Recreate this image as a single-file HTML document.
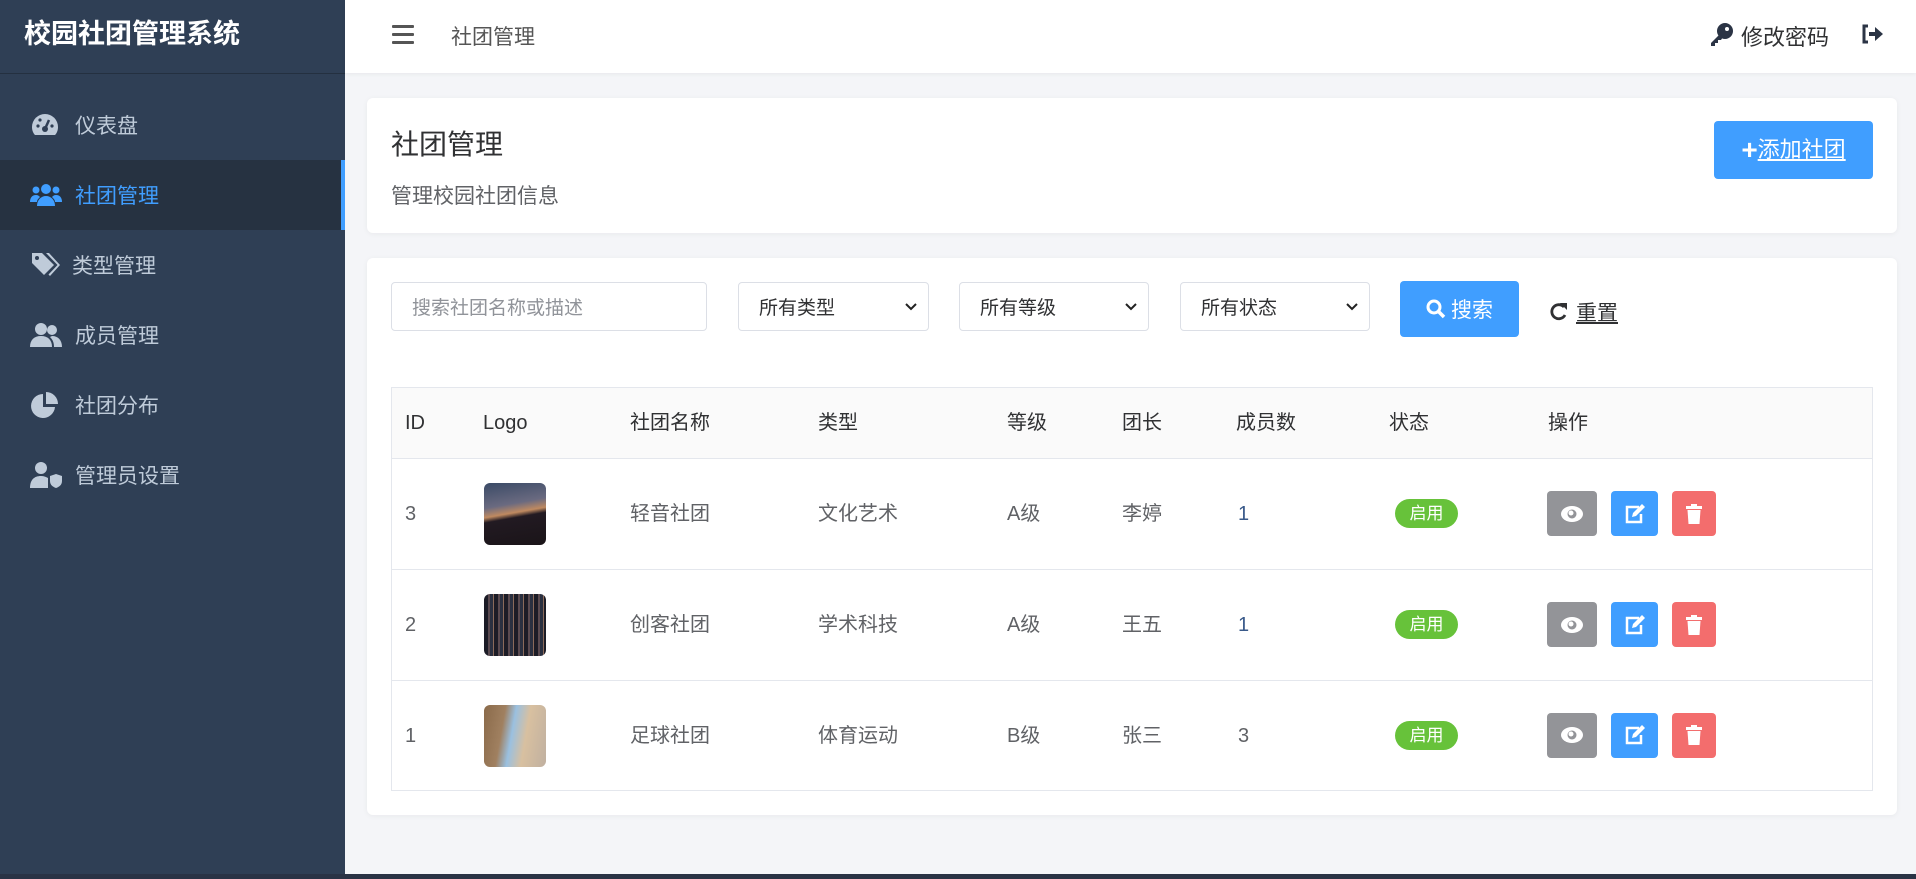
<!DOCTYPE html>
<html><head><meta charset="utf-8"><style>
*{box-sizing:border-box;margin:0;padding:0}
body{width:1916px;height:879px;overflow:hidden;background:#f4f5f8;font-family:"Liberation Sans","Noto Sans CJK SC",sans-serif;position:relative;color:#606266}
.abs{position:absolute}
#side{left:0;top:0;width:345px;height:879px;background:#2f3f55}
#side .t{left:24px;top:14px;color:#fff;font-size:27px;font-weight:bold;line-height:40px}
#side .line{left:0;top:73px;width:345px;height:1px;background:#243040}
.mi{left:0;width:345px;height:70px;display:flex;align-items:center;color:#bfcbd9;font-size:21px}
.mi svg{position:absolute;left:30px}
.mi span{position:absolute;left:75px}
.mi.act{background:#263241;color:#409eff;border-right:4px solid #409eff}
#top{left:345px;top:0;width:1571px;height:73px;background:#fff;box-shadow:0 1px 4px rgba(0,0,0,.06)}
.card{background:#fff;border-radius:6px;box-shadow:0 1px 6px rgba(0,0,0,.05)}
.inp{border:1px solid #dcdfe6;border-radius:4px;background:#fff;height:49px;font-size:19px;display:flex;align-items:center;padding-left:20px;color:#303133}
.inp svg{position:absolute;right:10px;top:19px}
.tbl{left:391px;top:387px;width:1482px;border:1px solid #e4e7ed}
.hd{height:71px;background:#fafafa;border-bottom:1px solid #e4e7ed;position:relative}
.row{height:111px;border-bottom:1px solid #e4e7ed;position:relative}
.row:last-child{border-bottom:none;height:109px}
.c{position:absolute;top:50%;margin-top:-12px;height:24px;line-height:24px;font-size:20px;white-space:nowrap}
.hd .c{color:#303133}
.logo{position:absolute;left:92px;top:50%;margin-top:-31px;width:62px;height:62px;border-radius:6px}
.badge{position:absolute;left:1003px;top:50%;margin-top:-15px;width:63px;height:29px;border-radius:15px;background:#67c23a;color:#fff;font-size:17px;text-align:center;line-height:29px}
.btn{position:absolute;top:50%;margin-top:-23px;height:45px;border-radius:4px;display:flex;align-items:center;justify-content:center}
</style></head><body>
<div id="side" class="abs">
<div class="t abs">校园社团管理系统</div>
<div class="line abs"></div>
<div class="mi abs" style="top:90px"><svg width="30" height="26" viewBox="0 0 30 26"><path d="M15 2A13 13 0 0 0 2 15c0 3 1 6 3 8h20c2-2 3-5 3-8A13 13 0 0 0 15 2z" fill="#bfcbd9"/><circle cx="15" cy="17" r="3" fill="#2f3f55"/><path d="M15 17l4-9" stroke="#2f3f55" stroke-width="2.5"/><circle cx="8" cy="14" r="1.6" fill="#2f3f55"/><circle cx="10" cy="8" r="1.6" fill="#2f3f55"/><circle cx="22" cy="14" r="1.6" fill="#2f3f55"/></svg><span>仪表盘</span></div>
<div class="mi abs act" style="top:160px"><svg width="32" height="26" viewBox="0 0 32 26"><circle cx="16" cy="7" r="5" fill="#409eff"/><circle cx="6" cy="8" r="3.5" fill="#409eff"/><circle cx="26" cy="8" r="3.5" fill="#409eff"/><path d="M7 24c0-6 4-10 9-10s9 4 9 10z" fill="#409eff"/><path d="M0 20c0-4 2-7 6-7 2 0 3 1 4 2-2 2-3 3-3 5z M32 20c0-4-2-7-6-7-2 0-3 1-4 2 2 2 3 3 3 5z" fill="#409eff"/></svg><span>社团管理</span></div>
<div class="mi abs" style="top:230px"><svg width="30" height="28" viewBox="0 0 30 28"><path d="M2 2h10l12 12-10 10L2 12z" fill="#bfcbd9"/><circle cx="7" cy="7" r="2" fill="#2f3f55"/><path d="M16 2h3l11 12-10 11-1.5-1.5 9-9.5z" fill="#bfcbd9"/></svg><span style="left:72px">类型管理</span></div>
<div class="mi abs" style="top:300px"><svg width="32" height="26" viewBox="0 0 32 26"><circle cx="11" cy="7" r="6" fill="#bfcbd9"/><circle cx="22" cy="8" r="5" fill="#bfcbd9"/><path d="M0 25c0-7 4-11 11-11s11 4 11 11z" fill="#bfcbd9"/><path d="M22 14c6 0 10 4 10 11h-8c0-4-1-7-4-10z" fill="#bfcbd9"/></svg><span>成员管理</span></div>
<div class="mi abs" style="top:370px"><svg width="30" height="28" viewBox="0 0 30 28"><path d="M13 3a12 12 0 1 0 12 13H13z" fill="#bfcbd9"/><path d="M16 1v12h12A12 12 0 0 0 16 1z" fill="#bfcbd9"/></svg><span>社团分布</span></div>
<div class="mi abs" style="top:440px"><svg width="32" height="28" viewBox="0 0 32 28"><circle cx="11" cy="7" r="6" fill="#bfcbd9"/><path d="M0 27c0-8 4-12 11-12 3 0 5 1 7 2v10z" fill="#bfcbd9"/><path d="M20 15l6-2 6 2v5c0 4-3 6-6 7-3-1-6-3-6-7z" fill="#bfcbd9"/></svg><span>管理员设置</span></div>
</div>
<div id="top" class="abs">
<svg class="abs" style="left:47px;top:24px" width="22" height="20" viewBox="0 0 22 20"><rect y="1" width="22" height="3" rx="1" fill="#555"/><rect y="9" width="22" height="3" rx="1" fill="#555"/><rect y="17" width="22" height="3" rx="1" fill="#555"/></svg>
<div class="abs" style="left:106px;top:21px;font-size:21px;color:#555">社团管理</div>
<svg class="abs" style="left:1365px;top:22px" width="24" height="24" viewBox="0 0 24 24"><circle cx="15" cy="9" r="8" fill="#2b3445"/><circle cx="17" cy="7" r="2" fill="#fff"/><path d="M10 12l-9 9v3h4v-3h3v-3h3l2-3z" fill="#2b3445"/></svg>
<div class="abs" style="left:1396px;top:20px;font-size:22px;color:#303133">修改密码</div>
<svg class="abs" style="left:1516px;top:24px" width="22" height="20" viewBox="0 0 22 20"><path d="M7 2H3v16h4" fill="none" stroke="#2b3445" stroke-width="3"/><path d="M8 8h6V3l8 7-8 7v-5H8z" fill="#2b3445"/></svg>
</div>
<div class="card abs" style="left:367px;top:98px;width:1530px;height:135px">
<div class="abs" style="left:24px;top:25px;font-size:28px;color:#303133">社团管理</div>
<div class="abs" style="left:24px;top:82px;font-size:21px;color:#606266">管理校园社团信息</div>
<div class="abs" style="left:1347px;top:23px;width:159px;height:58px;background:#409eff;border-radius:4px;color:#fff;font-size:22px;line-height:58px;text-align:center"><span style="font-size:28px;font-weight:bold;vertical-align:-2px">+</span><u>添加社团</u></div>
</div>
<div class="card abs" style="left:367px;top:258px;width:1530px;height:557px"></div>
<div class="inp abs" style="left:391px;top:282px;width:316px;color:#909399">搜索社团名称或描述</div>
<div class="inp abs" style="left:738px;top:282px;width:191px">所有类型<svg width="14" height="10" viewBox="0 0 14 10"><path d="M2 2l5 5 5-5" fill="none" stroke="#222" stroke-width="2"/></svg></div>
<div class="inp abs" style="left:959px;top:282px;width:190px">所有等级<svg width="14" height="10" viewBox="0 0 14 10"><path d="M2 2l5 5 5-5" fill="none" stroke="#222" stroke-width="2"/></svg></div>
<div class="inp abs" style="left:1180px;top:282px;width:190px">所有状态<svg width="14" height="10" viewBox="0 0 14 10"><path d="M2 2l5 5 5-5" fill="none" stroke="#222" stroke-width="2"/></svg></div>
<div class="abs" style="left:1400px;top:281px;width:119px;height:56px;background:#409eff;border-radius:4px;color:#fff;font-size:21px;display:flex;align-items:center;justify-content:center"><svg width="20" height="20" viewBox="0 0 20 20" style="margin-right:5px"><circle cx="8" cy="8" r="6" fill="none" stroke="#fff" stroke-width="3"/><path d="M12 12l6 6" stroke="#fff" stroke-width="3.5"/></svg>搜索</div>
<svg class="abs" style="left:1550px;top:301px" width="18" height="20" viewBox="0 0 18 20"><path d="M14 6A7 7 0 1 0 15 14" fill="none" stroke="#303133" stroke-width="2.8"/><path d="M10 2h7v7z" fill="#303133"/></svg>
<div class="abs" style="left:1576px;top:297px;font-size:21px;color:#303133"><u>重置</u></div>
<div class="tbl abs">
<div class="hd"><span class="c" style="left:13px">ID</span><span class="c" style="left:91px">Logo</span><span class="c" style="left:238px">社团名称</span><span class="c" style="left:426px">类型</span><span class="c" style="left:615px">等级</span><span class="c" style="left:730px">团长</span><span class="c" style="left:844px">成员数</span><span class="c" style="left:997px">状态</span><span class="c" style="left:1156px">操作</span></div>
<div class="row"><span class="c" style="left:13px">3</span><div class="logo" style="background:linear-gradient(170deg,#3a4a66 0%,#6a6a80 35%,#c08a60 48%,#221a22 55%,#1a1418 100%)"></div><span class="c" style="left:238px">轻音社团</span><span class="c" style="left:426px">文化艺术</span><span class="c" style="left:615px">A级</span><span class="c" style="left:730px">李婷</span><span class="c" style="left:846px;color:#3a5a8a">1</span><div class="badge">启用</div>
<div class="btn" style="left:1155px;width:50px;background:#939498"><svg width="24" height="18" viewBox="0 0 24 18"><ellipse cx="12" cy="9" rx="11" ry="8" fill="#fff"/><circle cx="12" cy="9" r="4.5" fill="#939498"/><circle cx="11" cy="8" r="2.5" fill="#fff"/></svg></div>
<div class="btn" style="left:1219px;width:47px;background:#409eff"><svg width="22" height="22" viewBox="0 0 22 22"><path d="M15 4H3v15h14v-8" fill="none" stroke="#fff" stroke-width="2.5"/><path d="M8 14l1-4 9-9 3 3-9 9z" fill="#fff"/></svg></div>
<div class="btn" style="left:1280px;width:44px;background:#f36d6d"><svg width="20" height="22" viewBox="0 0 20 22"><rect x="2" y="3" width="16" height="3" fill="#fff"/><rect x="7" y="1" width="6" height="3" fill="#fff"/><path d="M3.5 7h13l-1 14h-11z" fill="#fff"/></svg></div></div>
<div class="row"><span class="c" style="left:13px">2</span><div class="logo" style="background:repeating-linear-gradient(90deg,#1c1c26 0 4px,#5a4a50 4px 6px,#2a3040 6px 9px,#8a6a5a 9px 10px)"></div><span class="c" style="left:238px">创客社团</span><span class="c" style="left:426px">学术科技</span><span class="c" style="left:615px">A级</span><span class="c" style="left:730px">王五</span><span class="c" style="left:846px;color:#3a5a8a">1</span><div class="badge">启用</div>
<div class="btn" style="left:1155px;width:50px;background:#939498"><svg width="24" height="18" viewBox="0 0 24 18"><ellipse cx="12" cy="9" rx="11" ry="8" fill="#fff"/><circle cx="12" cy="9" r="4.5" fill="#939498"/><circle cx="11" cy="8" r="2.5" fill="#fff"/></svg></div>
<div class="btn" style="left:1219px;width:47px;background:#409eff"><svg width="22" height="22" viewBox="0 0 22 22"><path d="M15 4H3v15h14v-8" fill="none" stroke="#fff" stroke-width="2.5"/><path d="M8 14l1-4 9-9 3 3-9 9z" fill="#fff"/></svg></div>
<div class="btn" style="left:1280px;width:44px;background:#f36d6d"><svg width="20" height="22" viewBox="0 0 20 22"><rect x="2" y="3" width="16" height="3" fill="#fff"/><rect x="7" y="1" width="6" height="3" fill="#fff"/><path d="M3.5 7h13l-1 14h-11z" fill="#fff"/></svg></div></div>
<div class="row"><span class="c" style="left:13px">1</span><div class="logo" style="background:linear-gradient(100deg,#8a6a4a 0%,#a08060 30%,#9ac0e0 45%,#d8c0a0 65%,#c0b0a0 100%)"></div><span class="c" style="left:238px">足球社团</span><span class="c" style="left:426px">体育运动</span><span class="c" style="left:615px">B级</span><span class="c" style="left:730px">张三</span><span class="c" style="left:846px">3</span><div class="badge">启用</div>
<div class="btn" style="left:1155px;width:50px;background:#939498"><svg width="24" height="18" viewBox="0 0 24 18"><ellipse cx="12" cy="9" rx="11" ry="8" fill="#fff"/><circle cx="12" cy="9" r="4.5" fill="#939498"/><circle cx="11" cy="8" r="2.5" fill="#fff"/></svg></div>
<div class="btn" style="left:1219px;width:47px;background:#409eff"><svg width="22" height="22" viewBox="0 0 22 22"><path d="M15 4H3v15h14v-8" fill="none" stroke="#fff" stroke-width="2.5"/><path d="M8 14l1-4 9-9 3 3-9 9z" fill="#fff"/></svg></div>
<div class="btn" style="left:1280px;width:44px;background:#f36d6d"><svg width="20" height="22" viewBox="0 0 20 22"><rect x="2" y="3" width="16" height="3" fill="#fff"/><rect x="7" y="1" width="6" height="3" fill="#fff"/><path d="M3.5 7h13l-1 14h-11z" fill="#fff"/></svg></div></div>
</div>
<div class="abs" style="left:0;top:874px;width:1916px;height:5px;background:#2a3345"></div>
</body></html>
